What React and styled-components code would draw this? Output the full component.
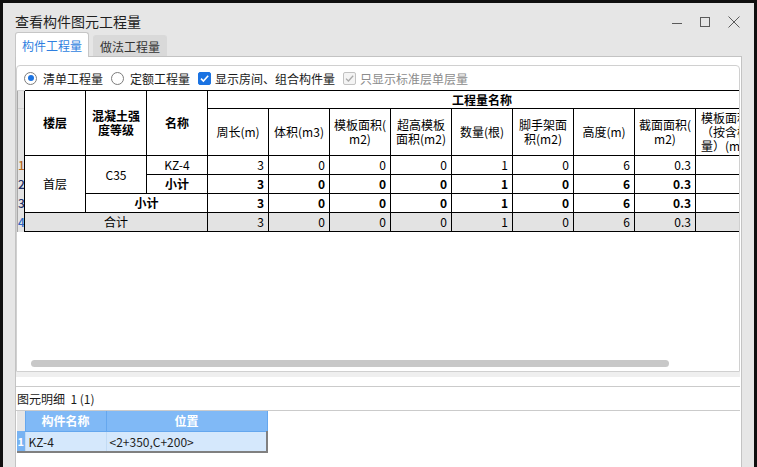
import React from "react"
import styled, { createGlobalStyle } from "styled-components"

const GlobalStyle = createGlobalStyle`
	html, body {
		margin: 0;
		padding: 0;
		background: #0f0f0f;
	}
	body {
		font-family: "Noto Sans CJK SC", "Noto Sans", sans-serif;
		font-size: 12px;
		color: #000;
		overflow: hidden;
	}
	* {
		box-sizing: border-box;
	}
`

const subHeaders = [
	["周长(m)"],
	["体积(m3)"],
	["模板面积(", "m2)"],
	["超高模板", "面积(m2)"],
	["数量(根)"],
	["脚手架面", "积(m2)"],
	["高度(m)"],
	["截面面积(", "m2)"],
	["模板面积", "（按含模", "量）(m2)"],
]

const values = ["3", "0", "0", "0", "1", "0", "6", "0.3", ""]

const rowNumColors = ["#b86a1e", "#1d2f66", "#1d2f66", "#2f66c0"]

const App = () => {
	const renderValues = (bold, shade) =>
		values.map((v, i) => (
			<Cell key={i} $align="right" $bold={bold} $shade={shade}>
				{v}
			</Cell>
		))

	return (
		<>
			<GlobalStyle />
			<Screen>
				<Window>
					<TitleBar>
						<Title>查看构件图元工程量</Title>
						<Controls>
							<svg width="10" height="10" viewBox="0 0 10 10">
								<path d="M0 6.5h10" stroke="#5a5a5a" strokeWidth="1" />
							</svg>
							<svg width="10" height="10" viewBox="0 0 10 10">
								<rect x="0.5" y="0.5" width="9" height="9" fill="none" stroke="#5a5a5a" />
							</svg>
							<svg width="12" height="12" viewBox="0 0 12 12">
								<path d="M0.5 0.5L11.5 11.5M11.5 0.5L0.5 11.5" stroke="#5a5a5a" strokeWidth="1" />
							</svg>
						</Controls>
					</TitleBar>

					<TabBar>
						<Tab $active>构件工程量</Tab>
						<Tab>做法工程量</Tab>
					</TabBar>

					<TabPanel>
						<QuantityPanel>
							<OptionBar>
								<Option>
									<Radio $checked />
									清单工程量
								</Option>
								<Option>
									<Radio />
									定额工程量
								</Option>
								<Option $gap={4}>
									<Checkbox>
										<svg width="11" height="11" viewBox="0 0 11 11">
											<path d="M2 5.6L4.4 8L9.2 2.8" fill="none" stroke="#fff" strokeWidth="1.6" />
										</svg>
									</Checkbox>
									显示房间、组合构件量
								</Option>
								<Option $gap={4} $disabled>
									<Checkbox $disabled>
										<svg width="11" height="11" viewBox="0 0 11 11">
											<path d="M2 5.6L4.4 8L9.2 2.8" fill="none" stroke="#a9a9a9" strokeWidth="1.3" />
										</svg>
									</Checkbox>
									只显示标准层单层量
								</Option>
							</OptionBar>

							<GridClip>
								<Grid>
									<colgroup>
										<col style={{ width: 7 }} />
										{Array.from({ length: 12 }).map((_, i) => (
											<col key={i} style={{ width: 61 }} />
										))}
									</colgroup>
									<thead>
										<Row $h={18}>
											<RowNum $head />
											<Cell rowSpan={2} $bold>楼层</Cell>
											<Cell rowSpan={2} $bold>
												混凝土强
												<br />
												度等级
											</Cell>
											<Cell rowSpan={2} $bold>名称</Cell>
											<Cell colSpan={9} $bold>工程量名称</Cell>
										</Row>
										<Row $h={47}>
											<RowNum $head />
											{subHeaders.map((lines, i) => (
												<Cell key={i} $clip={i === 8}>
													{lines.map((l, j) => (
														<React.Fragment key={j}>
															{j > 0 && <br />}
															{l}
														</React.Fragment>
													))}
												</Cell>
											))}
										</Row>
									</thead>
									<tbody>
										<Row $h={19}>
											<RowNum $color={rowNumColors[0]}>1</RowNum>
											<Cell rowSpan={3}>首层</Cell>
											<Cell rowSpan={2}>C35</Cell>
											<Cell>KZ-4</Cell>
											{renderValues(false, false)}
										</Row>
										<Row $h={19}>
											<RowNum $color={rowNumColors[1]}>2</RowNum>
											<Cell $bold>小计</Cell>
											{renderValues(true, false)}
										</Row>
										<Row $h={19}>
											<RowNum $color={rowNumColors[2]}>3</RowNum>
											<Cell colSpan={2} $bold>小计</Cell>
											{renderValues(true, false)}
										</Row>
										<Row $h={19}>
											<RowNum $color={rowNumColors[3]}>4</RowNum>
											<Cell colSpan={3} $shade>合计</Cell>
											{renderValues(false, true)}
										</Row>
									</tbody>
								</Grid>
							</GridClip>

							<ScrollTrack>
								<ScrollThumb />
							</ScrollTrack>
						</QuantityPanel>

						<Splitter />

						<DetailPanel>
							<DetailHeader>图元明细&nbsp; 1 (1)</DetailHeader>
							<DetailTable>
								<colgroup>
									<col style={{ width: 8 }} />
									<col style={{ width: 81 }} />
									<col style={{ width: 161 }} />
								</colgroup>
								<thead>
									<tr>
										<DetailNum $head />
										<DetailHead>构件名称</DetailHead>
										<DetailHead>位置</DetailHead>
									</tr>
								</thead>
								<tbody>
									<tr>
										<DetailNum>1</DetailNum>
										<DetailCell>KZ-4</DetailCell>
										<DetailCell $last>&lt;2+350,C+200&gt;</DetailCell>
									</tr>
								</tbody>
							</DetailTable>
						</DetailPanel>
					</TabPanel>
				</Window>
			</Screen>
		</>
	)
}

const Screen = styled.div`
	height: 467px;
	padding: 3px 3px 0 3px;
	overflow: hidden;
`

const Window = styled.div`
	height: 100%;
	background: #e6e6e6;
	display: flex;
	flex-direction: column;
`

const TitleBar = styled.div`
	height: 29px;
	padding: 8px 14px 0 12px;
	display: flex;
	align-items: center;
`

const Title = styled.span`
	font-size: 14px;
	line-height: 21px;
	color: #1f1f1f;
`

const Controls = styled.div`
	margin-left: auto;
	display: flex;
	align-items: center;
	gap: 18px;
`

const TabBar = styled.div`
	height: 24px;
	padding-left: 12px;
	display: flex;
	align-items: flex-end;
	gap: 4px;
	position: relative;
	z-index: 1;
`

const Tab = styled.div`
	height: ${(p) => (p.$active ? "25px" : "21px")};
	margin-bottom: ${(p) => (p.$active ? "-1px" : "0")};
	padding: 0 6px;
	display: flex;
	align-items: center;
	font-size: 12px;
	color: ${(p) => (p.$active ? "#2f7fe0" : "#333")};
	background: ${(p) => (p.$active ? "#fff" : "#d9d9d9")};
	border: 1px solid ${(p) => (p.$active ? "#c6c6c6" : "#d9d9d9")};
	border-bottom: none;
	border-radius: 3px 3px 0 0;
`

const TabPanel = styled.div`
	flex: 1;
	margin: 0 12px 0 12px;
	padding-top: 8px;
	background: #fff;
	border: 1px solid #c3c3c3;
	border-bottom: none;
	display: flex;
	flex-direction: column;
`

const QuantityPanel = styled.div`
	height: 307px;
	margin-right: 1px;
	border: 1px solid #d0d0d0;
	border-radius: 4px 4px 0 0;
	display: flex;
	flex-direction: column;
	overflow: hidden;
`

const OptionBar = styled.div`
	height: 24px;
	padding-left: 7px;
	display: flex;
	align-items: center;
	gap: 8px;
`

const Option = styled.label`
	display: flex;
	align-items: center;
	gap: ${(p) => p.$gap || 6}px;
	font-size: 12px;
	color: ${(p) => (p.$disabled ? "#8c8c8c" : "#1a1a1a")};
	white-space: nowrap;
`

const Radio = styled.span`
	width: 13px;
	height: 13px;
	border-radius: 50%;
	border: 1px solid #7c7c7c;
	background: #fff;
	display: flex;
	align-items: center;
	justify-content: center;

	&::after {
		content: "";
		width: 6px;
		height: 6px;
		border-radius: 50%;
		background: ${(p) => (p.$checked ? "#1b73e2" : "transparent")};
	}
`

const Checkbox = styled.span`
	width: 13px;
	height: 13px;
	border-radius: 2px;
	background: ${(p) => (p.$disabled ? "#f4f4f4" : "#1b73e2")};
	border: 1px solid ${(p) => (p.$disabled ? "#c2c2c2" : "#1b73e2")};
	display: flex;
	align-items: center;
	justify-content: center;
`

const GridClip = styled.div`
	overflow: hidden;
	flex: 1;
`

const Grid = styled.table`
	border-collapse: collapse;
	table-layout: fixed;
	width: 739px;
	font-size: 12px;
	line-height: 14px;
`

const Row = styled.tr`
	height: ${(p) => p.$h}px;
`

const Cell = styled.td`
	border: 1px solid #000;
	padding: 0 ${(p) => (p.$align === "right" ? "4px" : "1px")} 0 1px;
	text-align: ${(p) => p.$align || "center"};
	vertical-align: middle;
	font-weight: ${(p) => (p.$bold ? 700 : 400)};
	background: ${(p) => (p.$shade ? "#e3e3e3" : "#fff")};
	white-space: nowrap;
	overflow: hidden;
	text-overflow: clip;
	${(p) => p.$clip && "text-align: left; padding-left: 5px;"}
`

const RowNum = styled.td`
	padding: 0;
	border: none;
	border-left: 1px solid #a8a8a8;
	${(p) => p.$head && "border-top: 1px solid #d2d2d2;"}
	background: #e4e4e4;
	color: ${(p) => p.$color || "#333"};
	font-size: 12px;
	font-weight: 500;
	line-height: 12px;
	text-align: left;
	overflow: hidden;
`

const ScrollTrack = styled.div`
	height: 7px;
	margin: 0 0 4px 14px;
`

const ScrollThumb = styled.div`
	width: 638px;
	height: 100%;
	border-radius: 4px;
	background: #c8c8c8;
`

const Splitter = styled.div`
	height: 5px;
	margin-right: 1px;
	background: #efefef;
	margin-bottom: 9px;
`

const DetailPanel = styled.div`
	flex: 1;
	margin-right: 1px;
	border-top: 1px solid #cbcbcb;
`

const DetailHeader = styled.div`
	height: 24px;
	padding-left: 1px;
	display: flex;
	align-items: center;
	font-size: 12px;
	color: #1a1a1a;
	border-bottom: 1px solid #cbcbcb;
`

const DetailTable = styled.table`
	border-collapse: collapse;
	table-layout: fixed;
	width: 250px;
	margin-left: 1px;
	font-size: 12px;
`

const DetailHead = styled.th`
	height: 20px;
	padding: 0;
	background: #80b9f6;
	color: #fff;
	font-weight: 700;
	border: 1px solid #65a7ee;
	border-top: none;
`

const DetailNum = styled.td`
	padding: 0;
	height: 20px;
	text-align: center;
	font-size: 11px;
	font-weight: 700;
	color: #fff;
	background: ${(p) => (p.$head ? "#e6e6e6" : "#78b3f2")};
	${(p) => !p.$head && "border-bottom: 2px solid #808080;"}
`

const DetailCell = styled.td`
	height: 21px;
	padding: 0 0 0 3px;
	background: #d5e8fc;
	color: #1e1e1e;
	border: 1px solid #c2dbf4;
	border-bottom: 2px solid #808080;
	${(p) => p.$last && "border-right: 2px solid #808080;"}
	white-space: nowrap;
`

export default App
